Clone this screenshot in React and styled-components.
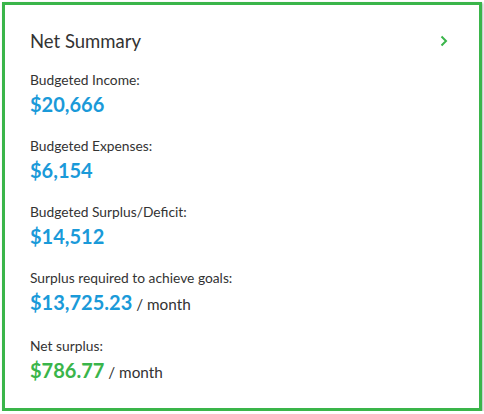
import React from 'react';
import styled, { createGlobalStyle } from 'styled-components';

const Global = createGlobalStyle`
    body {
        margin: 0;
        background: #fff;
        font-family: Lato, 'Open Sans', sans-serif;
    }
`;

const Card = styled.div`
    margin: 2px 0 0 2px;
    width: 480px;
    height: 409px;
    box-sizing: border-box;
    border: 3px solid #3ab54a;
    box-shadow: 1px 1px 2px rgba(0, 0, 0, 0.3);
    background: #fff;
    padding: 25px 25px 0 25px;
`;

const Header = styled.div`
    display: flex;
    justify-content: space-between;
    align-items: center;
    height: 22px;
    margin-bottom: 20px;
`;

const Title = styled.div`
    font-size: 18.5px;
    color: #333;
`;

const Chevron = styled.svg`
    width: 10px;
    height: 12px;
    margin-right: 5px;
`;

const List = styled.div`
    display: flex;
    flex-direction: column;
    gap: 22px;
`;

const Item = styled.div`
    display: flex;
    flex-direction: column;
    gap: 4px;
`;

const Label = styled.div`
    font-size: 13.8px;
    line-height: 16px;
    color: #333;
`;

const Value = styled.div`
    font-size: 20px;
    line-height: 24px;
    color: #333;
`;

const Amount = styled.span`
    font-weight: bold;
    color: ${(p) => (p.$green ? '#3ab54a' : '#1a9ad9')};
`;

const Unit = styled.span`
    font-size: 15.3px;
`;

const items = [
    { label: 'Budgeted Income:', amount: '$20,666' },
    { label: 'Budgeted Expenses:', amount: '$6,154' },
    { label: 'Budgeted Surplus/Deficit:', amount: '$14,512' },
    { label: 'Surplus required to achieve goals:', amount: '$13,725.23', unit: true },
    { label: 'Net surplus:', amount: '$786.77', unit: true, green: true },
];

const App = () => {
    return (
        <>
            <Global />
            <Card>
                <Header>
                    <Title>Net Summary</Title>
                    <Chevron viewBox="0 0 10 12">
                        <path d="M2.5 1.5 L7 6 L2.5 10.5" fill="none" stroke="#3ab54a" strokeWidth="2" />
                    </Chevron>
                </Header>
                <List>
                    {items.map((it) => (
                        <Item key={it.label}>
                            <Label>{it.label}</Label>
                            <Value>
                                <Amount $green={it.green}>{it.amount}</Amount>
                                {it.unit && <Unit> / month</Unit>}
                            </Value>
                        </Item>
                    ))}
                </List>
            </Card>
        </>
    );
};

export default App;
